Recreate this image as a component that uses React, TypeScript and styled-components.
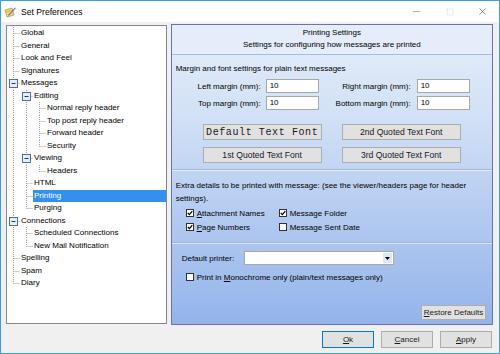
import React, { FC } from 'react';
import styled, { createGlobalStyle } from 'styled-components';
import { Minus, Square, X } from 'lucide-react';

const GlobalStyle = createGlobalStyle`
  html, body {
    margin: 0;
    padding: 0;
    background: #ffffff;
  }
  body {
    font-family: "Liberation Sans", Arial, sans-serif;
    font-size: 8px;
    color: #000;
  }
`;

const Window = styled.div`
  width: 500px;
  height: 354px;
  box-sizing: border-box;
  border: 1px solid #3c9ee5;
  display: flex;
  flex-direction: column;
  background: #f0f0f0;
  overflow: hidden;
`;

const TitleBar = styled.div`
  height: 21px;
  background: #ffffff;
  display: flex;
  align-items: center;
  padding-left: 3px;
`;

const Title = styled.span`
  font-size: 8.6px;
  margin-left: 5px;
  color: #000;
  flex: 1;
`;

const Controls = styled.div`
  display: flex;
  align-items: center;
  color: #555;
`;

const ControlButton = styled.div`
  width: 33px;
  display: flex;
  justify-content: center;
`;

const Body = styled.div`
  flex: 1;
  display: flex;
  flex-direction: column;
  padding: 2px 6px 0 5px;
`;

const Main = styled.div`
  display: flex;
  gap: 4px;
  height: 301px;
`;

const Tree = styled.div`
  width: 161px;
  box-sizing: border-box;
  margin-top: 1px;
  height: 299px;
  background: #fff;
  border: 1px solid #828790;
  padding-top: 1px;
`;

const Row = styled.div`
  height: 12.5px;
  display: flex;
  align-items: center;
`;

const Cell = styled.svg`
  width: 13px;
  height: 12.5px;
  flex: none;
`;

const Label = styled.div<{ $selected?: boolean }>`
  flex: 1;
  height: 12px;
  line-height: 12px;
  padding-left: 1px;
  white-space: nowrap;
  color: ${p => (p.$selected ? '#fff' : '#000')};
  background: ${p => (p.$selected ? '#3390ef' : 'transparent')};
`;

const Panel = styled.div`
  width: 323px;
  box-sizing: border-box;
  border: 1px solid #6b70b8;
  background: linear-gradient(180deg, #e6eefa 0%, #d2e1f6 30%, #b7cdf1 60%, #94b4ea 100%);
  display: flex;
  flex-direction: column;
`;

const PanelHeader = styled.div`
  height: 30px;
  padding-top: 2px;
  box-sizing: border-box;
  text-align: center;
  line-height: 12px;
  background: #e4edf9;
  border-bottom: 1px solid #a6bde3;
`;

const Section = styled.div<{ $top: number; $bottom: number; $last?: boolean }>`
  padding: ${p => p.$top}px 4px ${p => p.$bottom}px 4px;
  border-bottom: ${p => (p.$last ? 'none' : '1px solid #a0b8e0')};
  box-shadow: ${p => (p.$last ? 'none' : '0 1px 0 rgba(255,255,255,0.55)')};
  display: flex;
  flex-direction: column;
  flex: ${p => (p.$last ? 1 : 'none')};
`;

const Text = styled.div`
  line-height: 12px;
`;

const Para = styled.div`
  line-height: 13px;
`;

const MarginGrid = styled.div`
  display: grid;
  grid-template-columns: 90px 53px 98px 53px;
  row-gap: 3px;
  margin-top: 4px;
  align-items: center;
`;

const FieldLabel = styled.label<{ $gap: number }>`
  text-align: right;
  padding-right: ${p => p.$gap}px;
`;

const Input = styled.div`
  height: 14px;
  box-sizing: border-box;
  background: #fff;
  border: 1px solid #a8a8a8;
  line-height: 12px;
  padding-left: 3px;
`;

const FontGrid = styled.div`
  display: grid;
  grid-template-columns: 119px 119px;
  column-gap: 20px;
  row-gap: 7px;
  margin: 14px 0 0 27px;
`;

const Button = styled.div<{ $mono?: boolean; $default?: boolean }>`
  height: 16px;
  box-sizing: border-box;
  background: #e1e1e1;
  border: 1px solid ${p => (p.$default ? '#0078d7' : '#adadad')};
  display: flex;
  align-items: center;
  justify-content: center;
  font-family: ${p => (p.$mono ? '"Liberation Mono", "Courier New", monospace' : '"Liberation Sans", Arial, sans-serif')};
  font-size: ${p => (p.$mono ? '10px' : '8.6px')};
  letter-spacing: ${p => (p.$mono ? '0.6px' : '0')};
  color: #1a1a1a;
`;

const CheckGrid = styled.div`
  display: grid;
  grid-template-columns: 93px 120px;
  margin: 1px 0 0 10px;
`;

const CheckRow = styled.div`
  height: 14px;
  display: flex;
  align-items: center;
  gap: 3px;
  white-space: nowrap;
`;

const Box = styled.span`
  width: 8px;
  height: 8px;
  box-sizing: border-box;
  border: 1px solid #333;
  background: #fff;
  display: inline-flex;
  align-items: center;
  justify-content: center;
  flex: none;
`;

const PrinterRow = styled.div`
  display: flex;
  align-items: center;
  height: 14px;
  padding-left: 6px;
`;

const PrinterLabel = styled.span`
  width: 62px;
`;

const Select = styled.div`
  width: 150px;
  height: 14px;
  box-sizing: border-box;
  background: #fff;
  border: 1px solid #a8a8a8;
  display: flex;
  justify-content: flex-end;
  padding: 1px;
`;

const SelectArrow = styled.div`
  width: 9px;
  background: #dce8f7;
  display: flex;
  align-items: center;
  justify-content: center;
`;

const Spacer = styled.div`
  flex: 1;
`;

const RestoreButton = styled(Button)`
  align-self: flex-end;
  width: 65px;
  height: 15px;
  margin: 0 2px 4px 0;
  font-size: 8px;
`;

const Footer = styled.div`
  display: flex;
  justify-content: flex-end;
  gap: 7px;
  margin-top: 6px;
  padding-right: 1px;
`;

const FooterButton = styled(Button)`
  width: 52px;
  height: 17px;
  font-size: 8px;
`;

type Node = { label: string; d: number; open?: boolean; selected?: boolean };

const nodes: Node[] = [
  { label: 'Global', d: 0 },
  { label: 'General', d: 0 },
  { label: 'Look and Feel', d: 0 },
  { label: 'Signatures', d: 0 },
  { label: 'Messages', d: 0, open: true },
  { label: 'Editing', d: 1, open: true },
  { label: 'Normal reply header', d: 2 },
  { label: 'Top post reply header', d: 2 },
  { label: 'Forward header', d: 2 },
  { label: 'Security', d: 2 },
  { label: 'Viewing', d: 1, open: true },
  { label: 'Headers', d: 2 },
  { label: 'HTML', d: 1 },
  { label: 'Printing', d: 1, selected: true },
  { label: 'Purging', d: 1 },
  { label: 'Connections', d: 0, open: true },
  { label: 'Scheduled Connections', d: 1 },
  { label: 'New Mail Notification', d: 1 },
  { label: 'Spelling', d: 0 },
  { label: 'Spam', d: 0 },
  { label: 'Diary', d: 0 },
];

// does a sibling at this depth follow row i
const continues = (i: number, depth: number) => {
  for (let j = i + 1; j < nodes.length; j++) {
    if (nodes[j].d < depth) return false;
    if (nodes[j].d === depth) return true;
  }
  return false;
};

const LINE = '#a0a0a0';

const Guide: FC<{ on: boolean }> = ({ on }) => (
  <Cell viewBox="0 0 13 12.5">
    {on && <line x1="6.5" y1="0" x2="6.5" y2="12.5" stroke={LINE} strokeDasharray="1 1" />}
  </Cell>
);

const Elbow: FC<{ last: boolean; open?: boolean }> = ({ last, open }) => (
  <Cell viewBox="0 0 13 12.5">
    <line x1="6.5" y1="0" x2="6.5" y2={last ? 6.5 : 12.5} stroke={LINE} strokeDasharray="1 1" />
    <line x1="6.5" y1="6.5" x2="13" y2="6.5" stroke={LINE} strokeDasharray="1 1" />
    {open && (
      <g>
        <rect x="2.5" y="2.5" width="8" height="8" fill="#e8eef8" stroke="#4a6ea8" />
        <line x1="4.5" y1="6.5" x2="8.5" y2="6.5" stroke="#1e3d78" />
      </g>
    )}
  </Cell>
);

const Check: FC<{ checked?: boolean }> = ({ checked }) => (
  <Box>
    {checked && (
      <svg width="6" height="6" viewBox="0 0 6 6">
        <path d="M0.8 3 L2.4 4.6 L5.3 1.2" fill="none" stroke="#000" strokeWidth="1.3" />
      </svg>
    )}
  </Box>
);

const AppIcon: FC = () => (
  <svg width="12" height="12" viewBox="0 0 12 12">
    <path d="M1 4 L8 2 L10 9 L3 11 Z" fill="#f4d77a" stroke="#b08a2e" strokeWidth="0.7" />
    <path d="M2 6 L8.5 4.2" stroke="#c9a448" strokeWidth="0.6" />
    <path d="M4 9 L11 1.5 L11.8 2.3 L4.8 9.8 Z" fill="#4a74b8" />
  </svg>
);

const U: FC<{ c: string }> = ({ c }) => <span style={{ textDecoration: 'underline' }}>{c}</span>;

export default function App() {
  return (
    <>
      <GlobalStyle />
      <Window>
        <TitleBar>
          <AppIcon />
          <Title>Set Preferences</Title>
          <Controls>
            <ControlButton><Minus size={11} strokeWidth={1} /></ControlButton>
            <ControlButton><Square size={8} strokeWidth={1} color="#bbb" /></ControlButton>
            <ControlButton><X size={11} strokeWidth={1} color="#222" /></ControlButton>
          </Controls>
        </TitleBar>
        <Body>
          <Main>
            <Tree>
              {nodes.map((n, i) => {
                const guides = [];
                for (let k = 0; k < n.d; k++) guides.push(<Guide key={k} on={continues(i, k)} />);
                return (
                  <Row key={n.label}>
                    {guides}
                    <Elbow last={!continues(i, n.d)} open={n.open} />
                    <Label $selected={n.selected}>{n.label}</Label>
                  </Row>
                );
              })}
            </Tree>
            <Panel>
              <PanelHeader>
                <div>Printing Settings</div>
                <div>Settings for configuring how messages are printed</div>
              </PanelHeader>
              <Section $top={8} $bottom={6}>
                <Text>Margin and font settings for plain text messages</Text>
                <MarginGrid>
                  <FieldLabel $gap={5}>Left margin (mm):</FieldLabel>
                  <Input>10</Input>
                  <FieldLabel $gap={6}>Right margin (mm):</FieldLabel>
                  <Input>10</Input>
                  <FieldLabel $gap={5}>Top margin (mm):</FieldLabel>
                  <Input>10</Input>
                  <FieldLabel $gap={6}>Bottom margin (mm):</FieldLabel>
                  <Input>10</Input>
                </MarginGrid>
                <FontGrid>
                  <Button $mono>Default Text Font</Button>
                  <Button>2nd Quoted Text Font</Button>
                  <Button>1st Quoted Text Font</Button>
                  <Button>3rd Quoted Text Font</Button>
                </FontGrid>
              </Section>
              <Section $top={9} $bottom={8}>
                <Para>Extra details to be printed with message: (see the viewer/headers page for header</Para>
                <Para>settings).</Para>
                <CheckGrid>
                  <CheckRow><Check checked /><span><U c="A" />ttachment Names</span></CheckRow>
                  <CheckRow><Check checked /><span>Message Folder</span></CheckRow>
                  <CheckRow><Check checked /><span><U c="P" />age Numbers</span></CheckRow>
                  <CheckRow><Check /><span>Message Sent Date</span></CheckRow>
                </CheckGrid>
              </Section>
              <Section $top={8} $bottom={0} $last>
                <PrinterRow>
                  <PrinterLabel>Default printer:</PrinterLabel>
                  <Select>
                    <SelectArrow>
                      <svg width="5" height="3" viewBox="0 0 5 3"><path d="M0 0 H5 L2.5 3 Z" fill="#000" /></svg>
                    </SelectArrow>
                  </Select>
                </PrinterRow>
                <CheckRow style={{ marginTop: 5, paddingLeft: 10 }}>
                  <Check /><span>Print in <U c="M" />onochrome only (plain/text messages only)</span>
                </CheckRow>
                <Spacer />
                <RestoreButton><span><U c="R" />estore Defaults</span></RestoreButton>
              </Section>
            </Panel>
          </Main>
          <Footer>
            <FooterButton $default><span><U c="O" />k</span></FooterButton>
            <FooterButton><span><U c="C" />ancel</span></FooterButton>
            <FooterButton><span><U c="A" />pply</span></FooterButton>
          </Footer>
        </Body>
      </Window>
    </>
  );
}
